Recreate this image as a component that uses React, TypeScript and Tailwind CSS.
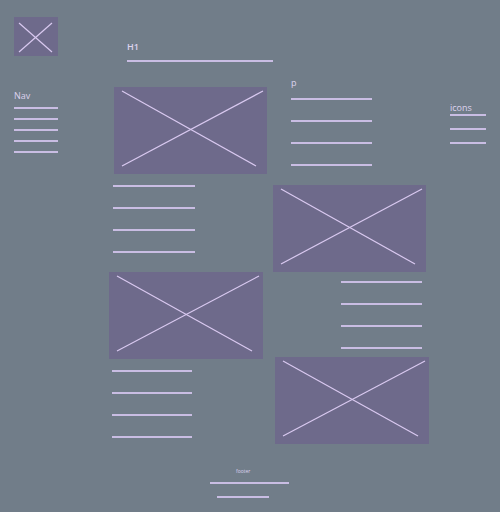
import React from 'react';

const line = "h-[2px] bg-[#c9bde3]";
const label = "text-[9px] leading-[9px] text-[#ddd3ee] font-['Open_Sans',sans-serif]";

type BoxProps = {
    w: number;
    h: number;
    className?: string;
    logo?: boolean;
};

// placeholder picture: purple block with a cross
function Placeholder({ w, h, className = '', logo = false }: BoxProps) {
    const l = logo ? 5 : 8;
    const t = logo ? 6 : 4;
    const r = logo ? 6 : 11;
    const b = logo ? 4 : 8;
    const r2 = logo ? 6 : 4;
    return (
        <div className={`bg-[#6e6a8b] shrink-0 ${className}`} style={{ width: w, height: h }}>
            <svg width={w} height={h} viewBox={`0 0 ${w} ${h}`}>
                <line x1={l} y1={t} x2={w - r} y2={h - b} stroke="#d9c9f0" strokeWidth="1.2" />
                <line x1={l} y1={h - b} x2={w - r2} y2={t} stroke="#d9c9f0" strokeWidth="1.2" />
            </svg>
        </div>
    );
}

function Lines({ count, width, gap, className = '' }: { count: number; width: number; gap: string; className?: string }) {
    return (
        <div className={`flex flex-col shrink-0 ${gap} ${className}`} style={{ width }}>
            {Array.from({ length: count }).map((_, i) => (
                <div key={i} className={line} />
            ))}
        </div>
    );
}

export default function App() {
    return (
        <div className="w-[500px] h-[512px] bg-[#717d89] flex flex-col overflow-hidden">
            <div className="flex items-start h-[456px]">
                {/* Sidebar */}
                <aside className="ml-[14px] w-[44px] pt-[17px] flex flex-col">
                    <Placeholder w={44} h={39} logo />
                    <p className={`${label} mt-[35px]`}>Nav</p>
                    <Lines count={5} width={44} gap="gap-[9px]" className="mt-[7px]" />
                </aside>

                {/* Main */}
                <main className="ml-[51px] w-[320px] flex flex-col">
                    <div className="h-[78px] pt-[42px] pl-[18px]">
                        <h1 className={`${label} font-semibold`}>H1</h1>
                        <div className={`${line} w-[146px] mt-[9px]`} />
                    </div>

                    <div className="h-[107px] flex items-start">
                        <Placeholder w={153} h={87} className="ml-[5px] mt-[9px]" />
                        <div className="ml-[24px] flex flex-col">
                            <p className={label}>p</p>
                            <Lines count={4} width={81} gap="gap-[20px]" className="mt-[11px]" />
                        </div>
                    </div>

                    <div className="h-[87px] flex items-start">
                        <Lines count={4} width={82} gap="gap-[20px]" className="ml-[4px]" />
                        <Placeholder w={153} h={87} className="ml-[78px]" />
                    </div>

                    <div className="h-[85px] flex items-start">
                        <Placeholder w={154} h={87} />
                        <Lines count={4} width={81} gap="gap-[20px]" className="ml-[78px] mt-[9px]" />
                    </div>

                    <div className="h-[87px] flex items-start">
                        <Lines count={4} width={80} gap="gap-[20px]" className="ml-[3px] mt-[13px]" />
                        <Placeholder w={154} h={87} className="ml-[83px]" />
                    </div>
                </main>

                {/* Right column */}
                <aside className="ml-[21px] w-[36px] pt-[103px] flex flex-col">
                    <p className={label}>icons</p>
                    <Lines count={3} width={36} gap="gap-[12px]" className="mt-[2px]" />
                </aside>
            </div>

            {/* Footer */}
            <footer className="flex flex-col pt-[12px]">
                <p className="ml-[236px] text-[5px] leading-[6px] text-[#ddd3ee] font-['Open_Sans',sans-serif]">footer</p>
                <div className={`${line} ml-[210px] w-[79px] mt-[8px]`} />
                <div className={`${line} ml-[217px] w-[52px] mt-[12px]`} />
            </footer>
        </div>
    );
}
